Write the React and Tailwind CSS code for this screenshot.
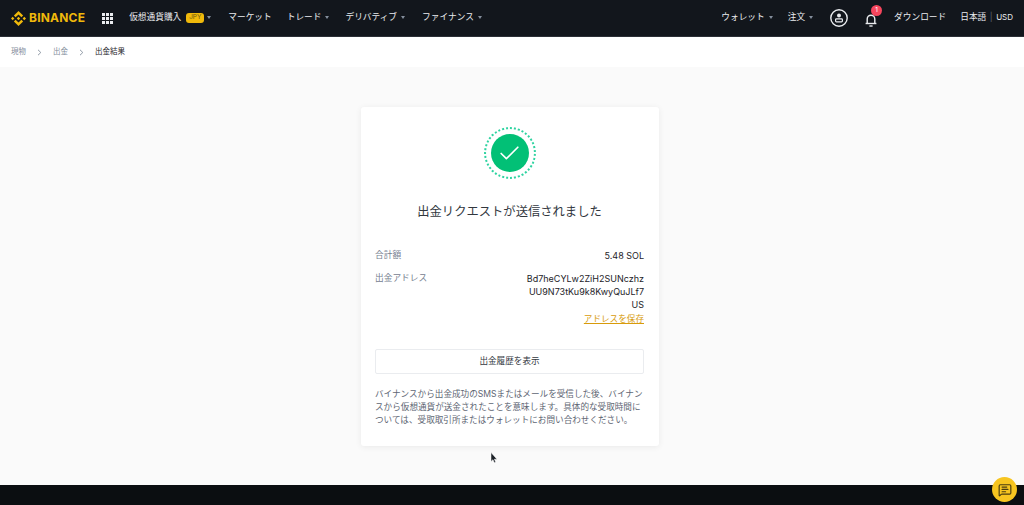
import { Check, MessageSquareText } from "lucide-react";

const font = { fontFamily: '"Inter", "Noto Sans CJK JP", sans-serif' };

function Caret({ className = "ml-[4px]" }) {
  return <span className={`h-0 w-0 border-x-[2px] border-t-[3px] border-x-transparent border-t-[#848e9c] ${className}`} />;
}

function NavItem({ label, caret = true, badge, className = "" }) {
  return (
    <div className={`flex items-center whitespace-nowrap ${className}`}>
      <span>{label}</span>
      {badge && (
        <span className="ml-[5px] flex h-[10px] w-[18px] items-center justify-center rounded-[3px] bg-[#f0b90b] text-[6.5px] text-[#6b5710]">
          {badge}
        </span>
      )}
      {caret && <Caret className={badge ? "ml-[3px]" : "ml-[4px]"} />}
    </div>
  );
}

function Logo() {
  return (
    <div className="flex items-center">
      <svg width="15" height="15" viewBox="0 0 126.61 126.61" fill="#f0b90b">
        <path d="M38.73 53.2l24.59-24.58 24.6 24.6 14.3-14.31L63.32 0 24.42 38.9z" />
        <path d="M0 63.31l14.3-14.31 14.31 14.31-14.31 14.3z" />
        <path d="M38.73 73.41l24.59 24.59 24.6-24.6 14.31 14.29-38.9 38.91-38.91-38.88z" />
        <path d="M98 63.31l14.3-14.31 14.31 14.3-14.31 14.32z" />
        <path d="M77.83 63.3L63.32 48.78 52.59 59.51l-1.24 1.23-2.54 2.54 14.51 14.5 14.51-14.47z" />
      </svg>
      <span className="ml-[3px] text-[12px] font-bold tracking-[0.2px] text-[#f0b90b]">BINANCE</span>
    </div>
  );
}

function GridIcon() {
  return (
    <div className="ml-[17px] grid h-[11px] w-[11px] grid-cols-3 gap-[1px]">
      {[...Array(9)].map((_, i) => (
        <span key={i} className="bg-[#eaecef]" />
      ))}
    </div>
  );
}

function UserIcon() {
  return (
    <svg width="18" height="18" viewBox="0 0 18 18" fill="none" stroke="#eaecef" strokeWidth="1.4">
      <circle cx="9" cy="9" r="8.2" />
      <circle cx="9" cy="6.6" r="2" fill="#eaecef" stroke="none" />
      <rect x="5.6" y="9.9" width="6.8" height="3" rx="0.8" strokeWidth="1.2" />
    </svg>
  );
}

function Bell() {
  return (
    <div className="relative ml-[17px] flex h-[18px] w-[12px] items-end">
      <svg width="12" height="14" viewBox="0 0 12 14" fill="none" stroke="#eaecef" strokeWidth="1.4">
        <path d="M2.2 10.2V6a3.8 3.8 0 0 1 7.6 0v4.2" />
        <path d="M0.6 10.5h10.8" />
        <path d="M4.4 13h3.2" />
      </svg>
      <span className="absolute left-[6px] top-[-4px] flex h-[11px] w-[11px] items-center justify-center rounded-full bg-[#f6465d] text-[6.5px] text-white">
        1
      </span>
    </div>
  );
}

function Header() {
  return (
    <header className="flex h-[37px] items-center border-b border-[#2b2f36] bg-[#12161c] pl-[11px] pr-[11px] text-[8.7px] text-[#eaecef]">
      <Logo />
      <GridIcon />
      <NavItem label="仮想通貨購入" badge="JPY" className="ml-[16px]" />
      <NavItem label="マーケット" caret={false} className="ml-[17px]" />
      <NavItem label="トレード" className="ml-[15px]" />
      <NavItem label="デリバティブ" className="ml-[16px]" />
      <NavItem label="ファイナンス" className="ml-[17px]" />
      <div className="ml-auto flex items-center">
        <NavItem label="ウォレット" />
        <NavItem label="注文" className="ml-[15px]" />
        <div className="ml-[17px] flex"><UserIcon /></div>
        <Bell />
        <span className="ml-[17px] whitespace-nowrap">ダウンロード</span>
        <div className="ml-[14px] flex items-center whitespace-nowrap">
          <span>日本語</span>
          <span className="mx-[3.5px] text-[#5e6673]">|</span>
          <span className="mb-[1px] text-[8px]">USD</span>
        </div>
      </div>
    </header>
  );
}

function Chevron() {
  return (
    <svg className="mx-[11px]" width="5" height="7" viewBox="0 0 5 7" fill="none" stroke="#848e9c" strokeWidth="0.9">
      <path d="M1 0.8l2.8 2.7L1 6.2" />
    </svg>
  );
}

function Breadcrumb() {
  return (
    <nav className="flex h-[30px] items-center bg-white pl-[11px] text-[7.5px] text-[#848e9c]">
      <span>現物</span>
      <Chevron />
      <span>出金</span>
      <Chevron />
      <span className="text-[#1e2329]">出金結果</span>
    </nav>
  );
}

function SuccessMark() {
  return (
    <div className="flex h-[52px] w-[52px] items-center justify-center rounded-full border-2 border-dotted border-[#2ed3a0]">
      <div className="flex h-[38px] w-[38px] items-center justify-center rounded-full bg-[#02c076]">
        <Check size={25} strokeWidth={1.6} className="text-white" />
      </div>
    </div>
  );
}

function Card() {
  return (
    <section className="flex w-[298px] flex-col rounded-[3px] bg-white pb-[19px] pl-[14px] pr-[15px] pt-[20px] shadow-[0_1px_6px_rgba(0,0,0,0.07)]">
      <div className="flex justify-center">
        <SuccessMark />
      </div>
      <h1 className="mt-[24px] text-center text-[12.3px] font-normal leading-[18px] text-[#32373e]">
        出金リクエストが送信されました
      </h1>
      <div className="mt-[28px] flex items-center justify-between text-[9px] leading-[13px]">
        <span className="text-[8.7px] text-[#76808f]">合計額</span>
        <span className="text-[#1e2329]">5.48 SOL</span>
      </div>
      <div className="mt-[10px] flex justify-between text-[9px] leading-[13px]">
        <span className="text-[8.7px] text-[#76808f]">出金アドレス</span>
        <div className="flex flex-col items-end text-[#1e2329]">
          <span>Bd7heCYLw2ZiH2SUNczhz</span>
          <span>UU9N73tKu9k8KwyQuJLf7</span>
          <span>US</span>
          <span className="mt-[2px] text-[8.6px] text-[#d89b0a] underline">アドレスを保存</span>
        </div>
      </div>
      <button
        type="button"
        className="mt-[23px] h-[25px] rounded-[2px] border border-[#eaecef] bg-white text-[8.6px] text-[#32373e]"
        style={font}
      >
        出金履歴を表示
      </button>
      <p className="mt-[14px] text-[8.6px] leading-[13px] text-[#5e6673]">
        バイナンスから出金成功のSMSまたはメールを受信した後、バイナンスから仮想通貨が送金されたことを意味します。具体的な受取時間については、受取取引所またはウォレットにお問い合わせください。
      </p>
    </section>
  );
}

export default function App() {
  return (
    <div className="relative flex h-[505px] flex-col overflow-hidden bg-[#fafafa]" style={font}>
      <Header />
      <Breadcrumb />
      <main className="flex flex-1 items-start justify-center pr-[4px] pt-[40px]">
        <Card />
      </main>
      <footer className="h-[20px] bg-[#0b0e11]" />
      {/* chat bubble */}
      <button
        type="button"
        className="absolute bottom-[3px] right-[7px] flex h-[25px] w-[25px] items-center justify-center rounded-full bg-[#f7c520]"
      >
        <MessageSquareText size={14} className="text-[#4a3d10]" />
      </button>
      {/* mouse pointer */}
      <svg className="absolute left-[490px] top-[452px]" width="8" height="12" viewBox="0 0 8 12" fill="#1e2329" stroke="#fff" strokeWidth="0.5">
        <path d="M1 0.5v9l2-1.8 1.3 3 1.4-.6-1.3-2.9h2.6z" />
      </svg>
    </div>
  );
}
